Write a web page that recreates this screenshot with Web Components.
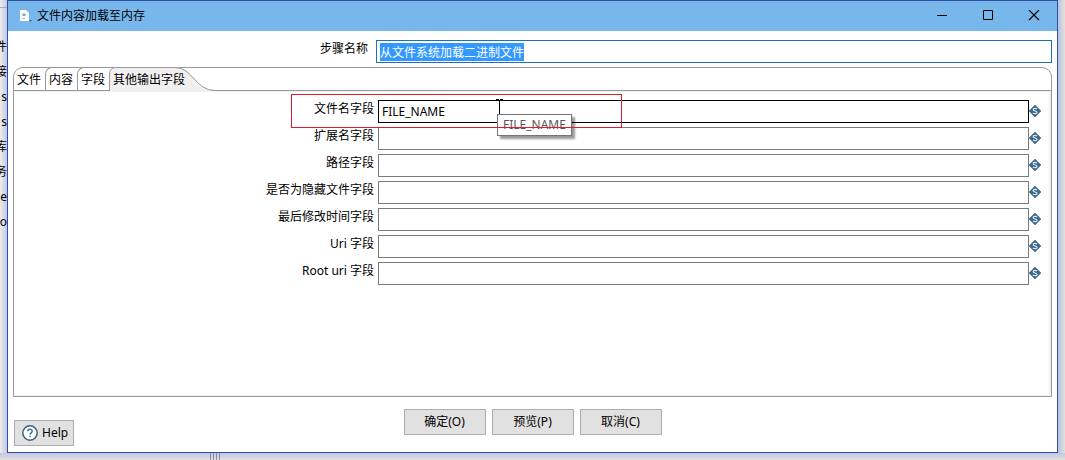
<!DOCTYPE html>
<html lang="zh-CN">
<head>
<meta charset="utf-8">
<title>文件内容加载至内存</title>
<style>
  body {
    margin: 0;
    font: 12px/16px "Noto Sans", "Noto Sans CJK SC", sans-serif;
    color: #000;
  }
</style>
</head>
<body>
<app-backdrop>
  <span slot="tree">件</span>
  <span slot="tree">接</span>
  <span slot="tree">s</span>
  <span slot="tree">s</span>
  <span slot="tree">库</span>
  <span slot="tree">务</span>
  <span slot="tree">e</span>
  <span slot="tree">o</span>
  <dialog-window heading="文件内容加载至内存">
    <step-name label="步骤名称" value="从文件系统加载二进制文件"></step-name>
    <tab-folder tabs="文件,内容,字段,其他输出字段" selected="3">
      <variable-field label="文件名字段" value="FILE_NAME" tip="FILE_NAME" active></variable-field>
      <variable-field label="扩展名字段"></variable-field>
      <variable-field label="路径字段"></variable-field>
      <variable-field label="是否为隐藏文件字段"></variable-field>
      <variable-field label="最后修改时间字段"></variable-field>
      <variable-field label="Uri 字段"></variable-field>
      <variable-field label="Root uri 字段"></variable-field>
    </tab-folder>
    <help-button slot="help">Help</help-button>
    <push-button slot="actions">确定(O)</push-button>
    <push-button slot="actions">预览(P)</push-button>
    <push-button slot="actions">取消(C)</push-button>
  </dialog-window>
</app-backdrop>

<script>
class AppBackdrop extends HTMLElement {
  connectedCallback() {
    this.attachShadow({ mode: 'open' });
    this.shadowRoot.innerHTML = `
      <style>
        :host {
          display: grid;
          grid-template-columns: 7px minmax(0, 1fr) 7px;
          grid-template-rows: 1fr 7px;
          min-height: 100vh;
          background: #dfe2dc;
        }
        .tree {
          display: flex;
          flex-direction: column;
          align-items: flex-end;
          gap: 9px;
          overflow: hidden;
          white-space: nowrap;
          background: linear-gradient(90deg, #efede6, #c4c8ea);
        }
        .toolbar {
          box-sizing: border-box;
          width: 100%;
          height: 8px;
          margin-bottom: 22px;
          border-bottom: 1px solid #a9abbd;
        }
        .right {
          grid-column: 3;
          grid-row: 1;
          background: linear-gradient(90deg, #b9c3e4, #e2e2dc);
        }
        .bottom {
          grid-column: 1 / -1;
          display: flex;
          padding-left: 210px;
          background: linear-gradient(#c3c6e4, #dfe2dc);
        }
        .sash {
          width: 10px;
          background: repeating-linear-gradient(90deg, #8e8e9c 0 1px, transparent 1px 3px);
        }
      </style>
      <div class="tree"><div class="toolbar"></div><slot name="tree"></slot></div>
      <slot></slot>
      <div class="right"></div>
      <div class="bottom"><div class="sash"></div></div>
    `;
  }
}
customElements.define('app-backdrop', AppBackdrop);

class DialogWindow extends HTMLElement {
  connectedCallback() {
    this.attachShadow({ mode: 'open' });
    this.shadowRoot.innerHTML = `
      <style>
        :host {
          display: flex;
          flex-direction: column;
          box-sizing: border-box;
          border: 1px solid #2f4f9f;
          background: #fff;
        }
        header {
          display: flex;
          align-items: center;
          height: 30px;
          padding-left: 10px;
          background: #78b7eb;
        }
        h1 {
          flex: 1;
          margin: 0 0 0 3px;
          font: inherit;
        }
        .caption {
          display: flex;
          align-items: center;
          justify-content: center;
          width: 46px;
          height: 30px;
          padding: 0;
          border: 0;
          background: none;
        }
        svg {
          display: block;
        }
        main {
          flex: 1;
          display: flex;
          flex-direction: column;
          gap: 4px;
          padding: 9px 5px 0;
        }
        footer {
          display: grid;
          grid-template-columns: 1fr auto 1fr;
          padding: 12px 6px 6px;
        }
        .help {
          align-self: end;
          justify-self: start;
          margin-top: 11px;
        }
        .actions {
          display: flex;
          align-items: flex-start;
          gap: 6px;
        }
      </style>
      <header>
        <svg width="16" height="16" viewBox="0 0 16 16" aria-hidden="true">
          <path d="M2 2h6l3 3v8H2z" fill="#fff"/>
          <path d="M4.500 5.500h3v2.500h-3z" fill="#78a9d2"/>
          <path d="M4 10.500h3" stroke="#9cc3e4"/>
          <path d="M11 12h3l-1.500 2z" fill="#3c6c95"/>
        </svg>
        <h1></h1>
        <button class="caption" aria-label="最小化">
          <svg width="12" height="12" viewBox="0 0 12 12"><path d="M1 5.500h10" stroke="#000"/></svg>
        </button>
        <button class="caption" aria-label="最大化">
          <svg width="12" height="12" viewBox="0 0 12 12"><path d="M1.500 .5h9v9h-9z" fill="none" stroke="#000"/></svg>
        </button>
        <button class="caption" aria-label="关闭">
          <svg width="12" height="12" viewBox="0 0 12 12"><path d="M1 0l10 10M11 0L1 10" stroke="#000" stroke-width="1.200"/></svg>
        </button>
      </header>
      <main><slot></slot></main>
      <footer>
        <div class="help"><slot name="help"></slot></div>
        <div class="actions"><slot name="actions"></slot></div>
      </footer>
    `;
    this.shadowRoot.querySelector('h1').textContent = this.getAttribute('heading');
  }
}
customElements.define('dialog-window', DialogWindow);

class StepName extends HTMLElement {
  connectedCallback() {
    this.attachShadow({ mode: 'open' });
    this.shadowRoot.innerHTML = `
      <style>
        :host {
          display: grid;
          grid-template-columns: 355px minmax(0, 1fr);
          column-gap: 8px;
        }
        label {
          padding-top: 1px;
          text-align: right;
        }
        input {
          box-sizing: border-box;
          height: 23px;
          padding: 0 3px;
          border: 1px solid #1d6fb8;
          border-radius: 0;
          outline: none;
          font: inherit;
          color: #000;
        }
        input::selection {
          background: #3399ff;
          color: #fff;
        }
      </style>
      <label for="name"></label>
      <input id="name" type="text">
    `;
    this.shadowRoot.querySelector('label').textContent = this.getAttribute('label');
    const input = this.shadowRoot.getElementById('name');
    input.value = this.getAttribute('value');
    input.focus();
    input.select();
  }
}
customElements.define('step-name', StepName);

class TabFolder extends HTMLElement {
  connectedCallback() {
    this.attachShadow({ mode: 'open' });
    this.shadowRoot.innerHTML = `
      <style>
        :host {
          flex: 1;
          display: flex;
          flex-direction: column;
          border: 1px solid #999;
          border-radius: 10px 10px 0 0;
        }
        .tabs {
          display: flex;
          height: 22px;
          border-bottom: 1px solid #999;
        }
        button {
          box-sizing: border-box;
          width: 32px;
          height: 23px;
          margin-top: -1px;
          padding: 2px 0 0 3px;
          border: solid #999;
          border-width: 1px 0 0 1px;
          border-top-left-radius: 7px;
          background: none;
          font: inherit;
          color: inherit;
          text-align: left;
          white-space: nowrap;
        }
        button:first-child {
          width: 31px;
          padding-left: 2px;
          border-color: transparent;
        }
        button[aria-selected="true"] {
          position: relative;
          width: 106px;
          height: 24px;
          border: 0;
          padding: 2px 0 0 4px;
        }
        svg {
          position: absolute;
          left: 0;
          top: 0;
        }
        span {
          position: relative;
        }
        .page {
          flex: 1;
          display: flex;
          flex-direction: column;
          gap: 4px;
          padding: 8px 8px 0 0;
          border: solid #f0f0f0;
          border-width: 1px 2px 1px 0;
        }
      </style>
      <div class="tabs" role="tablist"></div>
      <div class="page"><slot></slot></div>
    `;
    const bar = this.shadowRoot.querySelector('.tabs');
    const selected = Number(this.getAttribute('selected'));
    this.getAttribute('tabs').split(',').forEach((name, i) => {
      const tab = document.createElement('button');
      tab.setAttribute('role', 'tab');
      tab.setAttribute('aria-selected', i === selected);
      if (i === selected) {
        tab.innerHTML = `
          <svg width="106" height="24" viewBox="0 0 106 24" aria-hidden="true">
            <path d="M.5 24V7Q.5.5 7 .5H66C84 .5 86 23.500 106 23.500V24z" fill="#f0f0f0"/>
            <path d="M.5 24V7Q.5.5 7 .5H66C84 .5 86 23.500 106 23.500" fill="none" stroke="#999"/>
          </svg>`;
      }
      const text = document.createElement('span');
      text.textContent = name;
      tab.append(text);
      bar.append(tab);
    });
  }
}
customElements.define('tab-folder', TabFolder);

class VariableField extends HTMLElement {
  connectedCallback() {
    this.attachShadow({ mode: 'open' });
    this.shadowRoot.innerHTML = `
      <style>
        :host {
          position: relative;
          display: grid;
          grid-template-columns: 360px minmax(0, 1fr) 12px;
        }
        label {
          padding-top: 1px;
          text-align: right;
        }
        input {
          box-sizing: border-box;
          height: 23px;
          margin-left: 4px;
          padding: 0 3px;
          border: 1px solid #7a7a7a;
          border-radius: 0;
          font: inherit;
          color: #000;
        }
        :host([active]) input {
          border-color: #000;
        }
        svg {
          display: block;
          margin-top: 5px;
        }
        .frame {
          position: absolute;
          left: 277px;
          top: -6px;
          box-sizing: border-box;
          width: 331px;
          height: 34px;
          border: 1px solid #d9202e;
          z-index: 2;
          pointer-events: none;
        }
        .caret {
          position: absolute;
          left: 482px;
          top: -1px;
          margin: 0;
        }
        .tip {
          position: absolute;
          left: 483px;
          top: 14px;
          padding: 2px 5px;
          border: 1px solid #767676;
          background: #fff;
          color: #575757;
          box-shadow: 3px 3px 2px rgba(0, 0, 0, 0.4);
          z-index: 1;
        }
      </style>
      <label for="field"></label>
      <input id="field" type="text">
      <svg width="12" height="12" viewBox="0 0 12 12" aria-hidden="true">
        <path d="M6 0l6 6-6 6-6-6z" fill="#3d6a8a" stroke="#3d6a8a" stroke-width=".6"/>
        <path d="M8 4.200C7 3 4.200 3.200 4.200 4.700S8 5.800 8 7.400 5 9 4 7.800" fill="none" stroke="#dfe9f0" stroke-width="1.200"/>
      </svg>
    `;
    this.shadowRoot.querySelector('label').textContent = this.getAttribute('label');
    this.shadowRoot.getElementById('field').value = this.getAttribute('value') || '';
    if (this.hasAttribute('tip')) {
      this.shadowRoot.querySelector('svg').insertAdjacentHTML('afterend', `
        <svg class="caret" width="7" height="16" viewBox="0 0 7 16" aria-hidden="true">
          <path d="M0 .5h3M4 .5h3M3.500 1v15" stroke="#000" fill="none"/>
        </svg>
        <div class="tip" role="tooltip"></div>
        <div class="frame"></div>`);
      this.shadowRoot.querySelector('.tip').textContent = this.getAttribute('tip');
    }
  }
}
customElements.define('variable-field', VariableField);

class PushButton extends HTMLElement {
  connectedCallback() {
    this.attachShadow({ mode: 'open' });
    this.shadowRoot.innerHTML = `
      <style>
        :host {
          display: block;
        }
        button {
          box-sizing: border-box;
          width: 82px;
          height: 26px;
          padding: 0;
          border: 1px solid #adadad;
          background: #e1e1e1;
          font: inherit;
          color: inherit;
        }
      </style>
      <button type="button"><slot></slot></button>
    `;
  }
}
customElements.define('push-button', PushButton);

class HelpButton extends HTMLElement {
  connectedCallback() {
    this.attachShadow({ mode: 'open' });
    this.shadowRoot.innerHTML = `
      <style>
        :host {
          display: block;
        }
        button {
          box-sizing: border-box;
          display: flex;
          align-items: center;
          gap: 4px;
          height: 26px;
          padding: 0 5px 0 7px;
          border: 1px solid #adadad;
          background: #e1e1e1;
          font: inherit;
          color: inherit;
        }
      </style>
      <button type="button">
        <svg width="16" height="16" viewBox="0 0 16 16" aria-hidden="true">
          <circle cx="8" cy="8" r="7.200" fill="#fff" stroke="#3b617f" stroke-width="1.500"/>
          <path d="M5.800 6.300C5.800 3.600 10.200 3.600 10.200 6.200 10.200 7.800 8 7.800 8 9.600M8 10.800v1.500" fill="none" stroke="#3d7199" stroke-width="1.500"/>
        </svg>
        <slot></slot>
      </button>
    `;
  }
}
customElements.define('help-button', HelpButton);
</script>
</body>
</html>
